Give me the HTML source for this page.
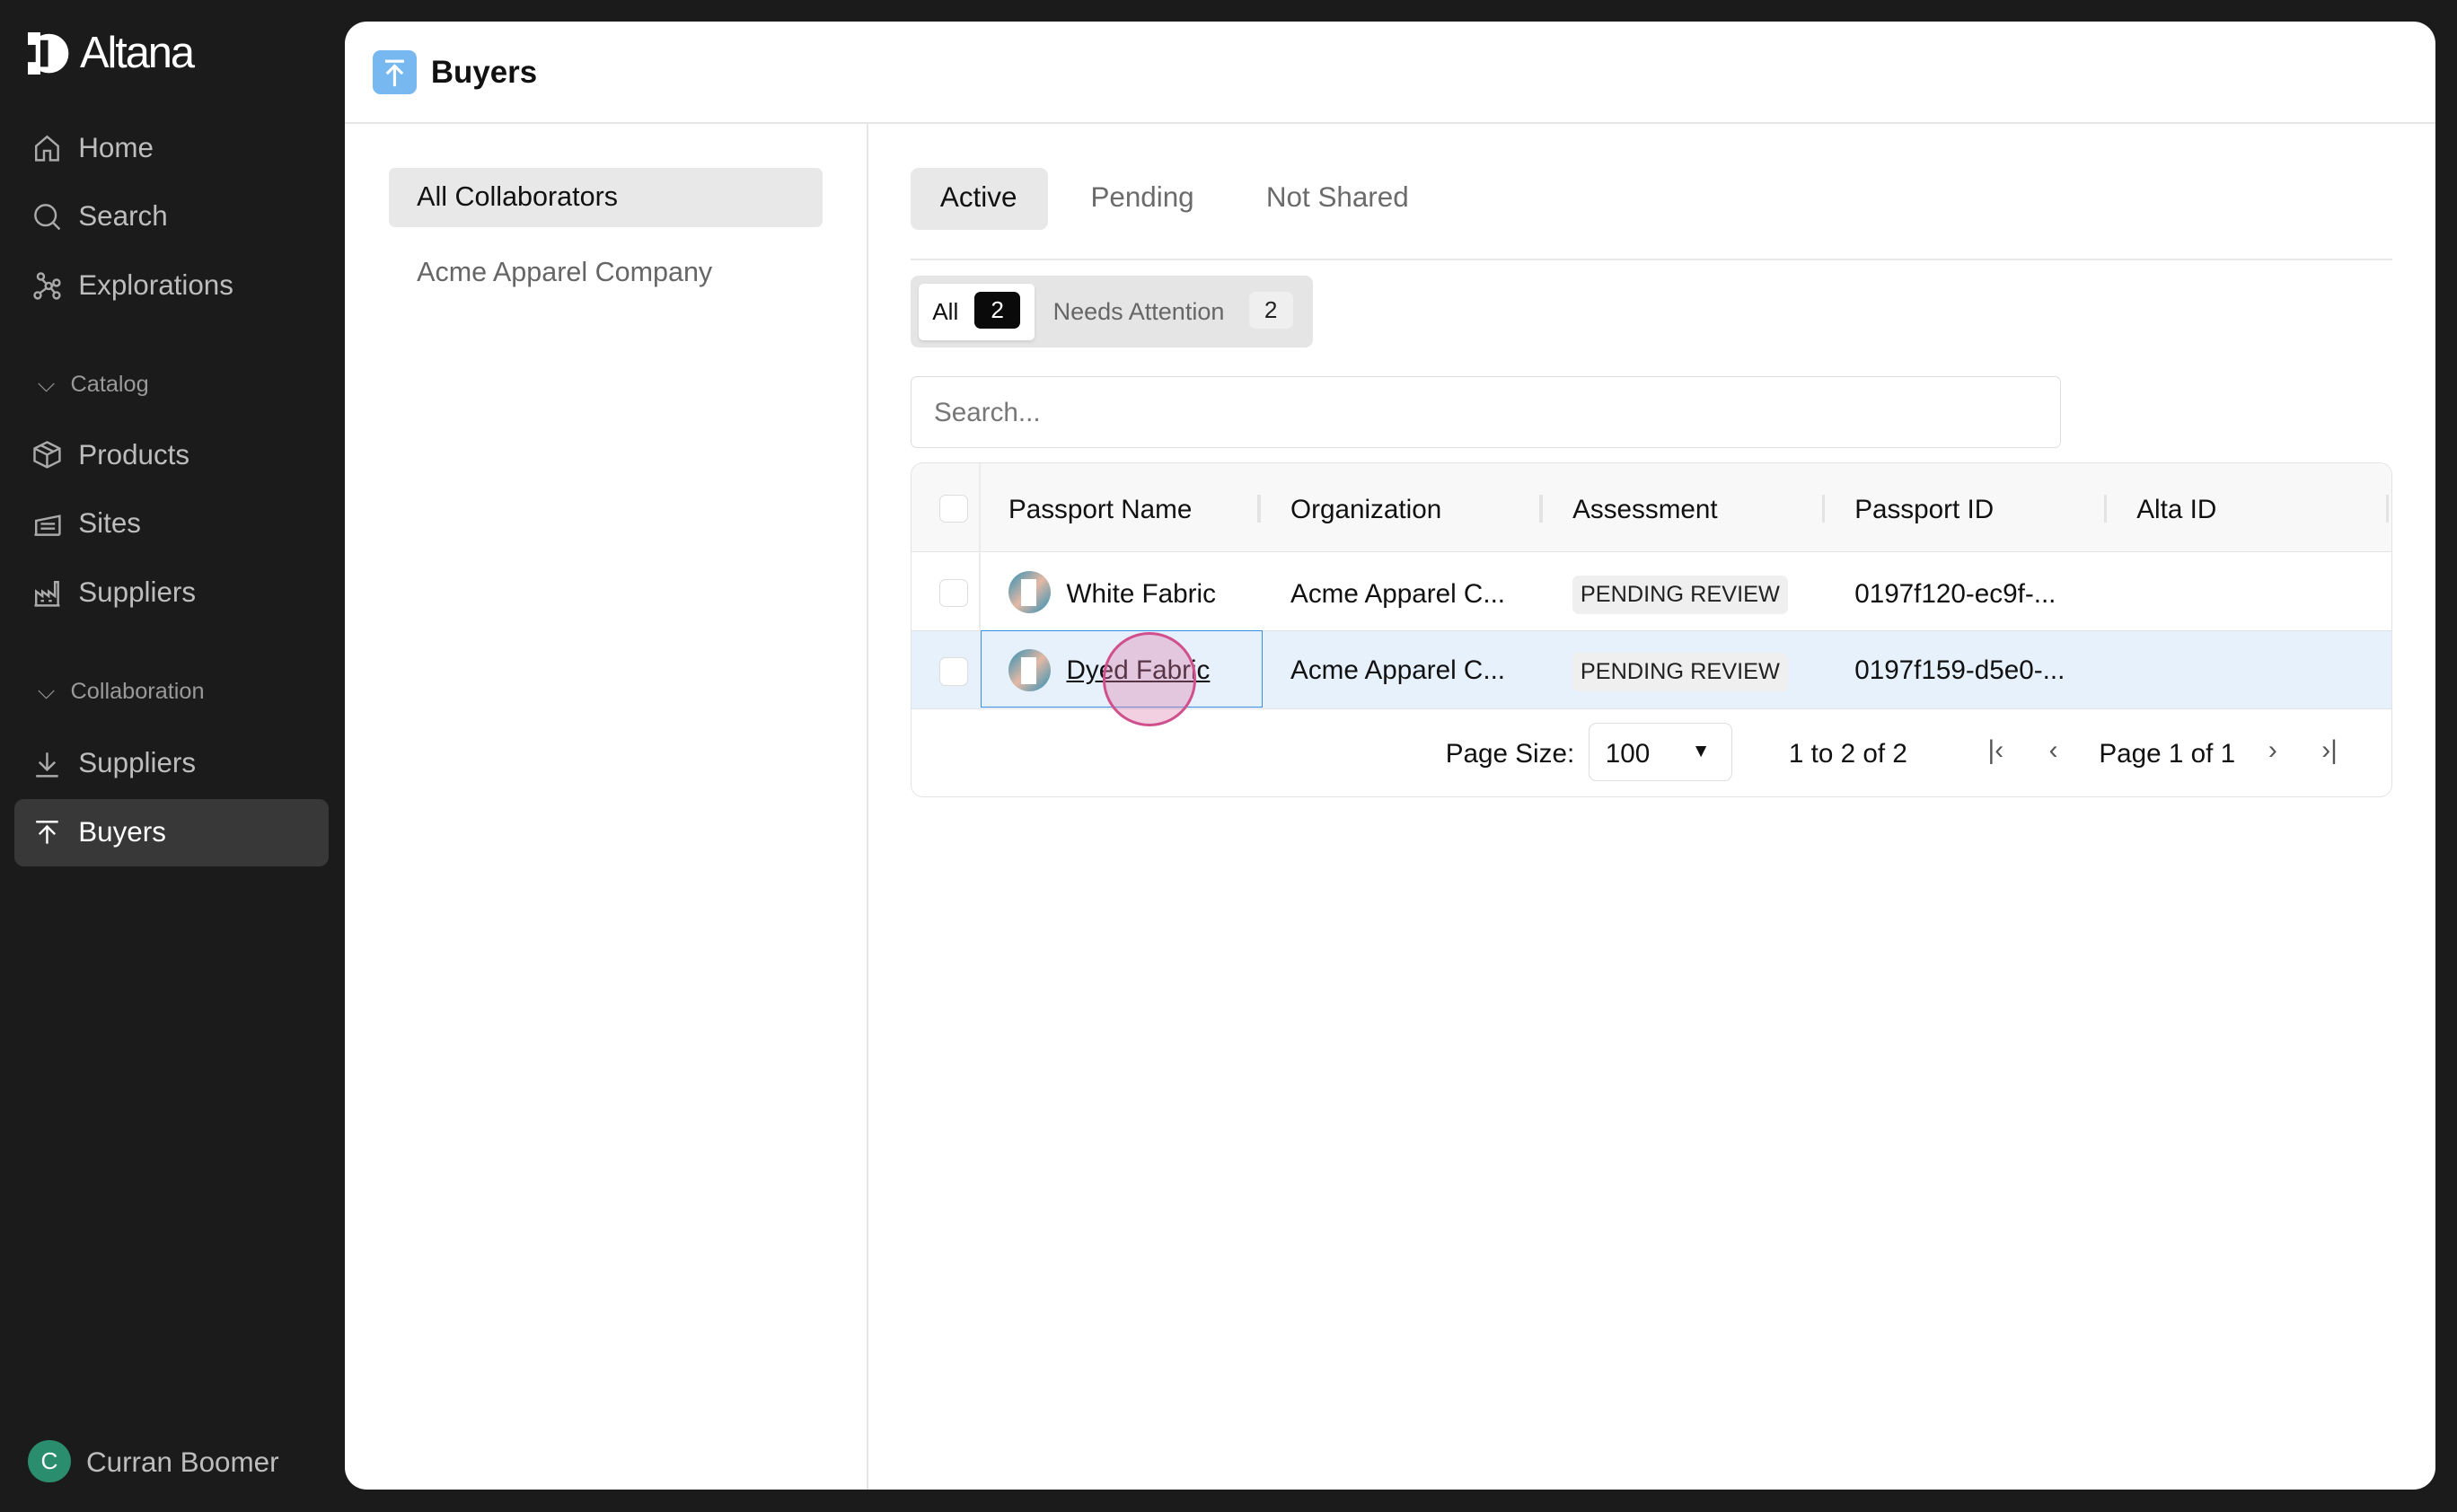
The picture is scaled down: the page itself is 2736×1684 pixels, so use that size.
<!DOCTYPE html>
<html><head><meta charset="utf-8"><style>
*{box-sizing:border-box;margin:0;padding:0}
html,body{width:2736px;height:1684px;overflow:hidden;background:#1b1b1b}
#r{zoom:1.7449;width:1568px;height:965px;position:relative;font-family:"Liberation Sans",sans-serif;color:#111}
.abs{position:absolute}
.nav{position:absolute;left:20px;color:#bdbdbd;font-size:18px;display:flex;align-items:center;gap:10px}
.nav svg{width:20px;height:20px;stroke:#aaa;fill:none;stroke-width:1.4}
.sec{position:absolute;left:24px;color:#9a9a9a;font-size:14.5px;display:flex;gap:10px;align-items:center}
.card{position:absolute;left:220px;top:14px;width:1334px;height:937px;background:#fff;border-radius:14px;overflow:hidden}
.t{position:absolute;white-space:nowrap}
.cb{position:absolute;width:18px;height:18px;border:1px solid #ddd;border-radius:4px;background:#fff}
.pill{position:absolute;background:#efefef;border-radius:4px;font-size:14.5px;padding:4px 5px;color:#222}
.pi{position:absolute;width:27px;height:27px;border-radius:50%;background:linear-gradient(135deg,#2a8fb5,#e4b9a5 50%,#2a8fb5)}
.pi:after{content:"";position:absolute;left:8px;top:5px;width:10px;height:17px;background:#fff}
</style></head><body><div id="r">
<div class="abs" style="left:18px;top:18px;display:flex;align-items:center;gap:6px;color:#fff">
<svg width="27" height="27" viewBox="0 0 27 27"><circle cx="13.5" cy="13.5" r="12.5" fill="#fff"/><rect x="0" y="0" width="8" height="27" fill="#fff"/><rect x="8" y="5" width="5" height="17" fill="#1b1b1b"/><rect x="13" y="5" width="5" height="17" fill="#fff"/><rect x="0" y="8" width="5" height="11" fill="#1b1b1b"/></svg>
<span style="font-size:28px;letter-spacing:-1.2px">Altana</span></div>
<div class="nav" style="top:84px"><svg viewBox="0 0 20 20"><path d="M3 9l7-6 7 6v9h-5v-6H8v6H3z"/></svg>Home</div>
<div class="nav" style="top:128px"><svg viewBox="0 0 20 20"><circle cx="9" cy="9" r="6.5"/><path d="M14 14l4 4"/></svg>Search</div>
<div class="nav" style="top:172px"><svg viewBox="0 0 20 20"><circle cx="6" cy="4" r="2"/><circle cx="11" cy="10" r="2"/><circle cx="4" cy="16" r="2"/><circle cx="16" cy="16" r="2"/><circle cx="16" cy="8" r="2"/><path d="M7 6l3 3M9.5 11.5l-4 3M12.5 11.5l2.5 3M13 10h1"/></svg>Explorations</div>
<div class="sec" style="top:237px">⌵ <span>Catalog</span></div>
<div class="nav" style="top:280px"><svg viewBox="0 0 20 20"><path d="M10 2l8 4v8l-8 4-8-4V6zM2 6l8 4 8-4M10 10v8M6 4l8 4"/></svg>Products</div>
<div class="nav" style="top:324px"><svg viewBox="0 0 20 20"><path d="M2 17h16M3 17V8l15-3v12M6 10h9M6 13h9"/></svg>Sites</div>
<div class="nav" style="top:368px"><svg viewBox="0 0 20 20"><path d="M2 18h16M3 18V9l4 3V9l4 3V9l4 3V3h2v15M6 15h2M11 15h2"/></svg>Suppliers</div>
<div class="sec" style="top:433px">⌵ <span>Collaboration</span></div>
<div class="nav" style="top:477px"><svg viewBox="0 0 20 20"><path d="M10 3v11M5 9l5 5 5-5M3 18h14"/></svg>Suppliers</div>
<div class="abs" style="left:9px;top:510px;width:201px;height:43px;background:#383838;border-radius:6px"></div>
<div class="nav" style="top:521px;color:#fff"><svg viewBox="0 0 20 20" style="stroke:#fff"><path d="M3 3h14M10 17V6M5 11l5-5 5 5"/></svg>Buyers</div>
<div class="abs" style="left:18px;top:919px;width:27px;height:27px;border-radius:50%;background:#2a8d6d;color:#fff;font-size:15px;text-align:center;line-height:27px">C</div>
<div class="t" style="left:55px;top:923px;color:#bdbdbd;font-size:18px">Curran Boomer</div>
<div class="card">
<div class="abs" style="left:18px;top:18px;width:28px;height:28px;border-radius:5px;background:#78b8f0"><svg width="28" height="28" viewBox="0 0 28 28" style="stroke:#fff;fill:none;stroke-width:1.8"><path d="M8 7h12M14 23V11M9 15l5-5 5 5"/></svg></div>
<div class="t" style="left:55px;top:21px;font-size:20px;font-weight:bold">Buyers</div>
<div class="abs" style="left:0;top:64px;width:1334px;height:1px;background:#e6e6e6"></div>
<div class="abs" style="left:333px;top:65px;width:1px;height:880px;background:#e6e6e6"></div>
<div class="abs" style="left:28px;top:93px;width:277px;height:38px;background:#e8e8e8;border-radius:4px"></div>
<div class="t" style="left:46px;top:102px;font-size:17.5px">All Collaborators</div>
<div class="t" style="left:46px;top:150px;font-size:17.5px;color:#666">Acme Apparel Company</div>
<div class="abs" style="left:361px;top:93px;width:88px;height:40px;background:#e8e8e8;border-radius:5px"></div>
<div class="t" style="left:380px;top:102px;font-size:18px">Active</div>
<div class="t" style="left:476px;top:102px;font-size:18px;color:#6b6b6b">Pending</div>
<div class="t" style="left:588px;top:102px;font-size:18px;color:#6b6b6b">Not Shared</div>
<div class="abs" style="left:361px;top:151px;width:946px;height:1px;background:#e8e8e8"></div>
<div class="abs" style="left:361px;top:162px;width:257px;height:46px;background:#e5e5e5;border-radius:5px"></div>
<div class="abs" style="left:366px;top:167px;width:74px;height:36px;background:#fff;border-radius:3px;box-shadow:0 1px 2px rgba(0,0,0,.1)"></div>
<div class="t" style="left:375px;top:176px;font-size:15px">All</div>
<div class="abs" style="left:402px;top:172px;width:29px;height:24px;background:#0a0a0a;border-radius:4px;color:#fff;font-size:15px;text-align:center;line-height:24px">2</div>
<div class="t" style="left:452px;top:176px;font-size:15.5px;color:#666">Needs Attention</div>
<div class="abs" style="left:577px;top:172px;width:28px;height:24px;background:#efefef;border-radius:4px;font-size:15px;text-align:center;line-height:24px;color:#222">2</div>
<div class="abs" style="left:361px;top:226px;width:734px;height:46px;border:1px solid #ddd;border-radius:4px"></div>
<div class="t" style="left:376px;top:240px;font-size:17px;color:#777">Search...</div>
<div class="abs" style="left:361px;top:281px;width:946px;height:214px;border:1px solid #e3e3e3;border-radius:8px;overflow:hidden">
 <div class="abs" style="left:0;top:0;width:946px;height:57px;background:#f8f8f8;border-bottom:1px solid #e3e3e3"></div>
 <div class="abs" style="left:43px;top:0;width:1px;height:156px;background:#ececec"></div>
 <div class="abs" style="left:0;top:107px;width:946px;height:50px;background:#e6f1fb;border-top:1px solid #e3e3e3;border-bottom:1px solid #e3e3e3"></div>
 <div class="cb" style="left:18px;top:20px"></div><div class="cb" style="left:18px;top:74px"></div><div class="cb" style="left:18px;top:124px"></div>
 <div class="t" style="left:62px;top:20px;font-size:17px">Passport Name</div>
 <div class="t" style="left:242px;top:20px;font-size:17px">Organization</div>
 <div class="t" style="left:422px;top:20px;font-size:17px">Assessment</div>
 <div class="t" style="left:602px;top:20px;font-size:17px">Passport ID</div>
 <div class="t" style="left:782px;top:20px;font-size:17px">Alta ID</div>
 <div class="abs" style="left:221px;top:20px;width:2px;height:18px;background:#e3e3e3"></div>
 <div class="abs" style="left:401px;top:20px;width:2px;height:18px;background:#e3e3e3"></div>
 <div class="abs" style="left:581px;top:20px;width:2px;height:18px;background:#e3e3e3"></div>
 <div class="abs" style="left:761px;top:20px;width:2px;height:18px;background:#e3e3e3"></div>
 <div class="abs" style="left:941px;top:20px;width:2px;height:18px;background:#e3e3e3"></div>
 <div class="pi" style="left:62px;top:69px"></div>
 <div class="t" style="left:99px;top:74px;font-size:17px">White Fabric</div>
 <div class="t" style="left:242px;top:74px;font-size:17px">Acme Apparel C...</div>
 <div class="pill" style="left:422px;top:72px">PENDING REVIEW</div>
 <div class="t" style="left:602px;top:74px;font-size:17px">0197f120-ec9f-...</div>
 <div class="abs" style="left:44px;top:107px;width:180px;height:49px;border:1px solid #3b8fe0"></div>
 <div class="pi" style="left:62px;top:119px"></div>
 <div class="t" style="left:99px;top:123px;font-size:17px;text-decoration:underline">Dyed Fabric</div>
 <div class="abs" style="left:122px;top:108px;width:60px;height:60px;border-radius:50%;border:2px solid #d0508e;background:rgba(220,120,170,.35)"></div>
 <div class="t" style="left:242px;top:123px;font-size:17px">Acme Apparel C...</div>
 <div class="pill" style="left:422px;top:121px">PENDING REVIEW</div>
 <div class="t" style="left:602px;top:123px;font-size:17px">0197f159-d5e0-...</div>
 <div class="t" style="left:341px;top:176px;font-size:17px">Page Size:</div>
 <div class="abs" style="left:432px;top:166px;width:92px;height:37px;border:1px solid #ddd;border-radius:5px"></div>
 <div class="t" style="left:443px;top:176px;font-size:17px">100</div>
 <div class="t" style="left:498px;top:177px;font-size:12px">▼</div>
 <div class="t" style="left:560px;top:176px;font-size:17px">1 to 2 of 2</div>
 <div class="t" style="left:687px;top:174px;font-size:17px;color:#555">|‹</div>
 <div class="t" style="left:726px;top:174px;font-size:17px;color:#555">‹</div>
 <div class="t" style="left:758px;top:176px;font-size:17px">Page 1 of 1</div>
 <div class="t" style="left:866px;top:174px;font-size:17px;color:#555">›</div>
 <div class="t" style="left:900px;top:174px;font-size:17px;color:#555">›|</div>
</div>
</div>
</div></body></html>
